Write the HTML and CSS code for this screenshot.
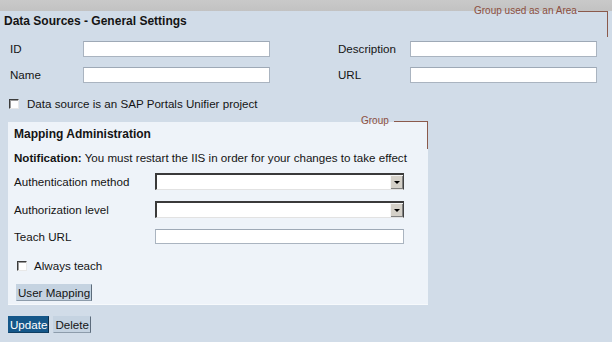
FILE: index.html
```html
<!DOCTYPE html>
<html lang="en">
  <head>
    <meta charset="utf-8">
    <title>Data Sources - General Settings</title>
    <link rel="stylesheet" href="styles.css">
  </head>
  <body>
    <div class="topbar"></div>

    <div class="area">
      <h1 class="area-title">Data Sources - General Settings</h1>

      <div class="fields">
        <label class="lbl" for="dsId">ID</label>
        <div><input class="txt" id="dsId" type="text"></div>
        <label class="lbl" for="dsDesc">Description</label>
        <div><input class="txt" id="dsDesc" type="text"></div>

        <label class="lbl" for="dsName">Name</label>
        <div><input class="txt" id="dsName" type="text"></div>
        <label class="lbl" for="dsUrl">URL</label>
        <div><input class="txt" id="dsUrl" type="text"></div>
      </div>

      <label class="check-row">
        <input type="checkbox" class="chk">
        <span>Data source is an SAP Portals Unifier project</span>
      </label>

      <div class="group">
        <h2 class="group-title">Mapping Administration</h2>
        <p class="notice"><b>Notification:</b> You must restart the IIS in order for your changes to take effect</p>

        <div class="group-fields">
          <label class="lbl">Authentication method</label>
          <div class="select"><span class="select-val"></span><span class="select-btn"></span></div>

          <label class="lbl">Authorization level</label>
          <div class="select"><span class="select-val"></span><span class="select-btn"></span></div>

          <label class="lbl" for="teachUrl">Teach URL</label>
          <div><input class="txt wide" id="teachUrl" type="text"></div>
        </div>

        <label class="check-row small">
          <input type="checkbox" class="chk">
          <span>Always teach</span>
        </label>

        <button class="btn">User Mapping</button>
      </div>

      <div class="actions">
        <button class="btn btn-primary">Update</button>
        <button class="btn">Delete</button>
      </div>
    </div>

    <!-- design annotations -->
    <div class="note note-area">Group used as an Area</div>
    <div class="note-line line-area"></div>
    <div class="note note-group">Group</div>
    <div class="note-line line-group"></div>
  </body>
</html>
```

FILE: styles.css
```css
body {
  margin: 0;
  width: 612px;
  height: 342px;
  overflow: hidden;
  position: relative;
  background: #d1dce8;
  font-family: "Liberation Sans", Arial, sans-serif;
  font-size: 11.6px;
  color: #141414;
}
.topbar {
  height: 11px;
  background: linear-gradient(#c9c9c9, #c2c2c2);
}
.area {
  padding: 0 8px;
}
.area-title {
  margin: 3px 0 0 -4px;
  font-size: 12px;
  line-height: 14px;
  font-weight: bold;
}
.fields {
  display: grid;
  grid-template-columns: 73px 255px 72px 187px;
  row-gap: 10px;
  margin: 13px 0 0 2px;
  align-items: center;
}
.lbl {
  line-height: 16px;
}
.txt {
  display: block;
  box-sizing: border-box;
  width: 187px;
  height: 16px;
  margin: 0;
  padding: 0 3px;
  border: 1px solid #aab4c0;
  border-top-color: #9ea9b6;
  background: #fff;
  font: inherit;
}
.txt.wide {
  width: 249px;
  height: 15px;
}
.check-row {
  display: flex;
  align-items: center;
  gap: 8px;
  margin: 14px 0 0 1px;
  line-height: 14px;
}
.chk {
  appearance: none;
  -webkit-appearance: none;
  box-sizing: border-box;
  width: 10px;
  height: 10px;
  margin: 0;
  background: #fff;
  border: 1px solid #e8e8e8;
  border-top-color: #3c3c3c;
  border-left-color: #3c3c3c;
  box-shadow: inset 1px 1px 0 #9a9a9a;
}
.group {
  margin-top: 11px;
  width: 420px;
  height: 183px;
  box-sizing: border-box;
  padding: 5px 6px 0;
  background: #eef3f9;
  border-bottom: 1px solid #f6f9fc;
}
.group-title {
  margin: 0;
  font-size: 12px;
  line-height: 14px;
  font-weight: bold;
}
.notice {
  margin: 10px 0 0;
  line-height: 14px;
}
.group-fields {
  display: grid;
  grid-template-columns: 141px 249px;
  grid-template-rows: 17px 17px 15px;
  row-gap: 11px;
  margin-top: 8px;
  align-items: center;
}
.select {
  display: flex;
  box-sizing: border-box;
  width: 249px;
  height: 17px;
  background: #fff;
  border: 2px solid #e6e6e6;
  border-top-color: #3a3a3a;
  border-left-color: #3a3a3a;
  border-right: 1px solid #404040;
  border-bottom: 1px solid #e2e2e2;
}
.select-val {
  flex: 1;
}
.select-btn {
  position: relative;
  width: 12px;
  background: #d4d0c8;
  border-left: 1px solid #f4f4f4;
  border-top: 1px solid #f4f4f4;
  box-shadow: inset -1px -1px 0 #808080;
}
.select-btn::after {
  content: "";
  position: absolute;
  left: 3px;
  top: 5px;
  border-left: 3px solid transparent;
  border-right: 3px solid transparent;
  border-top: 3px solid #000;
}
.check-row.small {
  margin: 15px 0 0 3px;
  gap: 7px;
}
.btn {
  display: inline-block;
  height: 17px;
  margin: 0;
  padding: 0 1px;
  font: inherit;
  line-height: 14px;
  color: #141414;
  background: #c5d3e1;
  border: 1px solid #c5d3e1;
  border-right-color: #5d6c7c;
  border-bottom-color: #8d9cab;
  border-radius: 0;
}
.group .btn {
  margin: 11px 0 0 2px;
}
.actions {
  display: flex;
  gap: 4px;
  margin-top: 11px;
}
.btn-primary {
  color: #fff;
  background: #155789;
  border-color: #155789;
  border-right-color: #0b2f4c;
  border-bottom-color: #0f3e62;
}

/* annotations over the layout */
.note {
  position: absolute;
  font-size: 10px;
  line-height: 12px;
  color: #8c4f40;
}
.note-line {
  position: absolute;
  border-top: 1px solid #8b5a4c;
  border-right: 1px solid #8b5a4c;
}
.note-area {
  left: 474px;
  top: 5px;
}
.line-area {
  left: 578px;
  top: 11px;
  width: 29px;
  height: 25px;
}
.note-group {
  left: 361px;
  top: 115px;
}
.line-group {
  left: 394px;
  top: 121px;
  width: 33px;
  height: 27px;
}
```
